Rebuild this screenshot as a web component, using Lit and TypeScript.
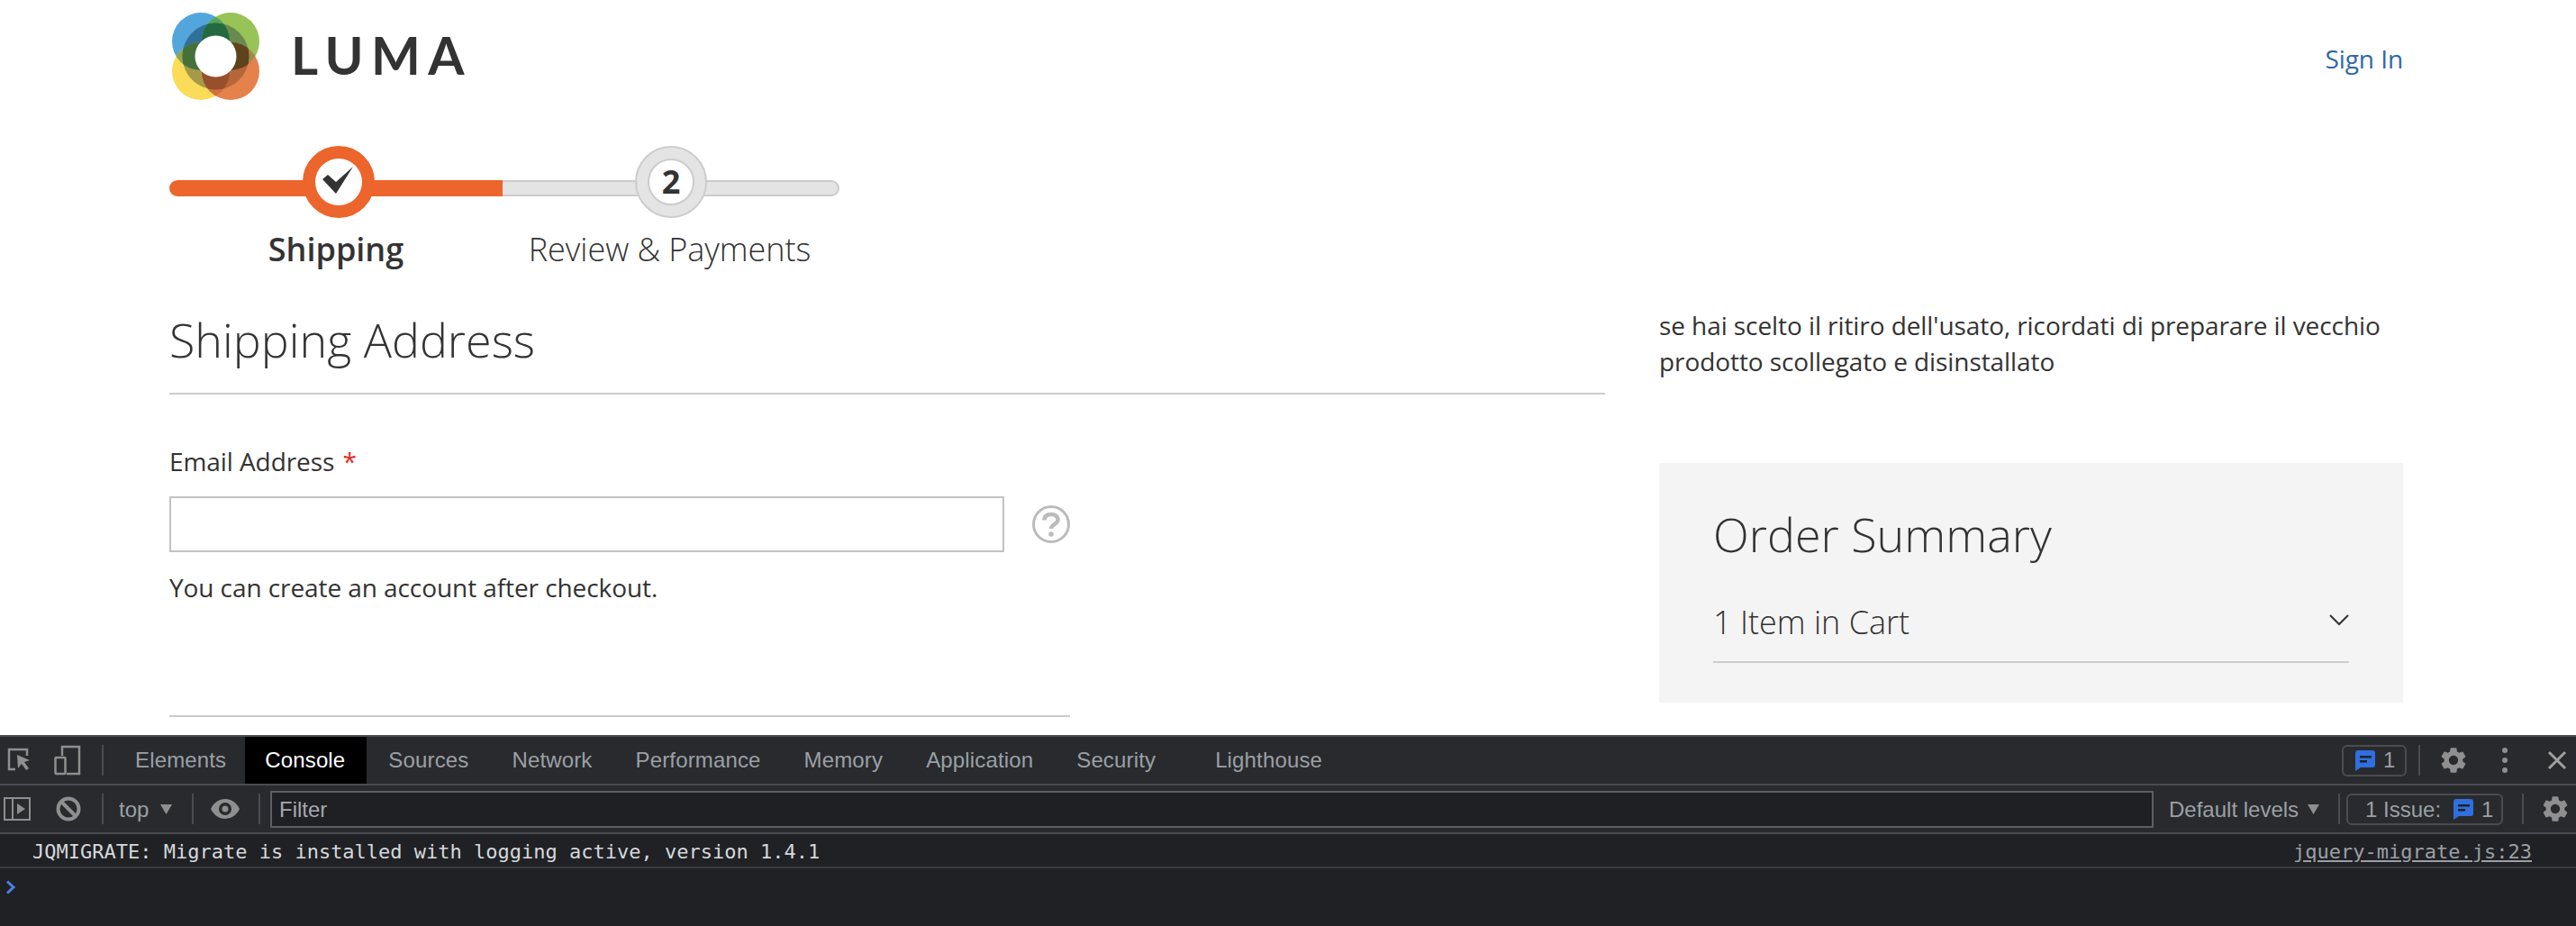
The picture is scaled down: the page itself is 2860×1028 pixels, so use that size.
import { LitElement, html, css, svg } from "lit";
import { customElement } from "lit/decorators.js";

const gearPath =
  "M19.14 12.94c.04-.3.06-.61.06-.94 0-.32-.02-.64-.07-.94l2.03-1.58a.49.49 0 0 0 .12-.61l-1.92-3.32a.488.488 0 0 0-.59-.22l-2.39.96c-.5-.38-1.03-.7-1.62-.94l-.36-2.54a.484.484 0 0 0-.48-.41h-3.84c-.24 0-.43.17-.47.41l-.36 2.54c-.59.24-1.13.57-1.62.94l-2.39-.96c-.22-.08-.47 0-.59.22L2.74 8.87c-.12.21-.08.47.12.61l2.03 1.58c-.05.3-.09.63-.09.94s.02.64.07.94l-2.03 1.58a.49.49 0 0 0-.12.61l1.92 3.32c.12.22.37.29.59.22l2.39-.96c.5.38 1.03.7 1.62.94l.36 2.54c.05.24.24.41.48.41h3.84c.24 0 .44-.17.47-.41l.36-2.54c.59-.24 1.13-.56 1.62-.94l2.39.96c.22.08.47 0 .59-.22l1.92-3.32c.12-.22.07-.47-.12-.61l-2.01-1.58zM12 15.6c-1.98 0-3.6-1.62-3.6-3.6s1.62-3.6 3.6-3.6 3.6 1.62 3.6 3.6-1.62 3.6-3.6 3.6z";

const gear = html`<svg class="gear" viewBox="2.4 2.2 19.2 19.6"><path fill="#8f8f8f" fill-rule="evenodd" d=${gearPath}></path></svg>`;

const msg = html`<svg class="msg" viewBox="0 0 22 23">
  <path fill="#2f6fde" d="M3 0h16a3 3 0 0 1 3 3v13a3 3 0 0 1-3 3H6l-6 4V3a3 3 0 0 1 3-3z"></path>
  <path fill="#202124" d="M5 6h13v2.400H5zM5 11h8v2.400H5z"></path>
</svg>`;

const logo = svg`
  <defs>
    <clipPath id="cb"><circle cx="33" cy="32" r="32"></circle></clipPath>
    <clipPath id="cg"><circle cx="66" cy="32" r="32"></circle></clipPath>
    <clipPath id="cy"><circle cx="33" cy="65" r="32"></circle></clipPath>
    <clipPath id="co"><circle cx="66" cy="65" r="32"></circle></clipPath>
    <clipPath id="cr"><circle cx="49.5" cy="48.5" r="37"></circle></clipPath>
  </defs>
  <circle cx="33" cy="32" r="32" fill="#52a6dc"></circle>
  <circle cx="66" cy="32" r="32" fill="#98c356"></circle>
  <circle cx="33" cy="65" r="32" fill="#fbdc58"></circle>
  <circle cx="66" cy="65" r="32" fill="#e5814a"></circle>
  <g clip-path="url(#cb)"><circle cx="66" cy="32" r="32" fill="#52a458"></circle></g>
  <g clip-path="url(#cg)"><circle cx="66" cy="65" r="32" fill="#a08a4c"></circle></g>
  <g clip-path="url(#co)"><circle cx="33" cy="65" r="32" fill="#cc7240"></circle></g>
  <g clip-path="url(#cy)"><circle cx="33" cy="32" r="32" fill="#8fa552"></circle></g>
  <g clip-path="url(#cr)">
    <circle cx="33" cy="32" r="32" fill="#2f7199"></circle>
    <circle cx="66" cy="32" r="32" fill="#698a4f"></circle>
    <circle cx="33" cy="65" r="32" fill="#a69a48"></circle>
    <circle cx="66" cy="65" r="32" fill="#b6673a"></circle>
    <g clip-path="url(#cb)"><circle cx="66" cy="32" r="32" fill="#236b3f"></circle></g>
    <g clip-path="url(#cg)"><circle cx="66" cy="65" r="32" fill="#5e441c"></circle></g>
    <g clip-path="url(#co)"><circle cx="33" cy="65" r="32" fill="#984f2b"></circle></g>
    <g clip-path="url(#cy)"><circle cx="33" cy="32" r="32" fill="#46703a"></circle></g>
  </g>
  <circle cx="49.5" cy="48.5" r="23" fill="#fff"></circle>
`;

@customElement("app-root")
export class AppRoot extends LitElement {
  static styles = css`
    :host { display: flex; flex-direction: column; width: 2860px; height: 1028px; overflow: hidden; font-family: "Open Sans", sans-serif; color: #333; background: #fff; }
    * { box-sizing: border-box; }

    .page { height: 816px; flex: none; padding: 0 192px 0 188px; overflow: hidden; }
    .header { display: flex; justify-content: space-between; height: 162px; }
    .brand { display: flex; gap: 35px; padding: 14px 0 0 2px; }
    .brand svg { width: 98px; height: 97px; flex: none; }
    .word { font-family: Lato, sans-serif; font-weight: 700; font-size: 58px; line-height: 64px; letter-spacing: 8.5px; color: #333; margin-top: 15px; }
    .signin { color: #2e67a8; font-size: 28px; line-height: 38px; margin-top: 46px; letter-spacing: -0.08px; }

    .steps { display: flex; width: 744px; height: 179px; flex: none; }
    .step { position: relative; width: 374px; display: flex; flex-direction: column; align-items: center; }
    .step.done { width: 370px; }
    .track { position: absolute; left: 0; right: 0; top: 38px; height: 18px; background: #e4e4e4; border-top: 2px solid #ccc; border-bottom: 2px solid #ccc; }
    .step:last-child .track { border-right: 2px solid #ccc; border-radius: 0 9px 9px 0; }
    .step.done .track { background: #ec652c; border: 0; border-radius: 9px 0 0 9px; }
    .dot { position: relative; flex: none; width: 80px; height: 80px; border-radius: 50%; display: flex; align-items: center; justify-content: center; background: #e4e4e4; border: 2px solid #ccc; }
    .dot span { width: 52px; height: 52px; border-radius: 50%; background: #fff; border: 2px solid #ccc; display: flex; align-items: center; justify-content: center; font-weight: 700; font-size: 36px; line-height: 1; color: #333; }
    .done .dot { background: #ec652c; border-color: #ec652c; margin-left: 6px; }
    .done .dot span { border: 0; }
    .done .dot svg { width: 34px; height: 30px; display: block; margin: 0 2px 4px 0; }
    .label { position: relative; margin-top: 11px; font-size: 36px; line-height: 48px; font-weight: 300; color: #333; }
    .done .label { font-weight: 600; }
    .step:last-child .label { margin-left: -3px; letter-spacing: -0.05px; }

    .cols { display: flex; justify-content: space-between; }
    .left { width: 1594px; }
    .right { width: 826px; }
    h2 { margin: 0; font-weight: 300; font-size: 52px; line-height: 72px; color: #333; }
    .hd { border-bottom: 2px solid #ccc; height: 97px; }

    .flabel { font-size: 28px; line-height: 40px; margin-top: 54px; letter-spacing: -0.08px; }
    .flabel i { color: #e02b27; font-style: normal; margin-left: 2px; }
    .field { display: flex; align-items: center; gap: 31px; margin-top: 19px; }
    .input { width: 927px; height: 62px; border: 2px solid #c2c2c2; background: #fff; }
    .help { width: 42px; height: 42px; }
    .note { font-size: 28px; line-height: 40px; margin-top: 19px; letter-spacing: -0.08px; }
    .fieldrule { width: 1000px; height: 2px; background: #ccc; margin-top: 122px; }

    .promo { font-size: 28px; line-height: 40px; margin: 0; width: 826px; color: #333; letter-spacing: -0.08px; }
    .summary { margin-top: 93px; background: #f4f4f4; height: 266px; padding: 43px 60px 0; }
    .cart { display: flex; justify-content: space-between; align-items: flex-start; height: 107px; border-bottom: 2px solid #ccc; font-size: 36px; font-weight: 300; padding-top: 37px; }
    .cart svg { width: 22px; height: 13px; margin-top: 16px; }

    .dt { flex: 1; display: flex; flex-direction: column; background: #202124; font-family: "Liberation Sans", sans-serif; font-size: 24px; color: #9aa0a6; border-top: 2px solid #494c50; }
    .tabs { height: 54px; display: flex; align-items: stretch; background: #292a2d; border-bottom: 2px solid #494c50; flex: none; }
    .row { display: flex; align-items: center; }
    .tools-l { width: 113px; gap: 26px; padding-left: 8px; }
    .sep { width: 2px; height: 34px; background: #494c50; flex: none; }
    .tabs .sep { align-self: center; }
    .tab { display: flex; align-items: center; padding: 0 24px; letter-spacing: 0.15px; }
    .tab.first { margin-left: 11px; padding-right: 21px; }
    .tab.on { background: #000; color: #fff; padding-left: 22px; }
    .tab.light { margin-left: 18px; }
    .spacer { flex: 1; }
    .pill { display: flex; align-items: center; height: 35px; border: 2px solid #4a4c50; border-radius: 6px; color: #9aa0a6; flex: none; }
    .pill.top { width: 72px; padding-left: 13px; gap: 9px; margin-right: 13px; }
    .pill.issue { width: 174px; padding-left: 19px; margin: 0 21px 0 7px; }
    .issue-text { margin-right: 14px; white-space: nowrap; }
    .issue-num { margin-left: 9px; }
    .msg { width: 22px; height: 23px; display: block; flex: none; }
    .gear { width: 28px; height: 28px; display: block; flex: none; }
    .gear-top { margin-left: 23px; }
    .gear-bar { margin: 0 9px 0 21px; }
    .dots { display: flex; flex-direction: column; gap: 5px; margin: 0 44px 0 40px; }
    .dots b { width: 6px; height: 6px; border-radius: 50%; background: #8f8f8f; }
    .x { width: 22px; height: 22px; display: block; margin-right: 10px; }

    .bar { height: 54px; display: flex; align-items: center; background: #292a2d; border-bottom: 2px solid #494c50; flex: none; }
    .bar-l { width: 113px; gap: 28px; padding-left: 4px; }
    .ctx { gap: 13px; padding: 0 21px 0 17px; width: 98px; }
    .ctx span { padding-top: 2px; }
    .eye { padding: 0 21px 0 19px; }
    .filter { flex: 1; height: 41px; margin: 0 17px 0 11px; border: 2px solid #5c5f63; background: #1f2023; display: flex; align-items: center; padding: 2px 0 0 8px; color: #a5a9ae; }
    .levels { display: flex; align-items: center; gap: 10px; width: 188px; white-space: nowrap; flex: none; }
    .levels span, .issue-text, .issue-num { padding-top: 1px; }
    .tri { width: 13px; height: 11px; display: block; }
    .logrow { height: 38px; display: flex; justify-content: space-between; align-items: center; border-bottom: 2px solid #3a3b3e; padding: 2px 49px 0 36px; font-family: "DejaVu Sans Mono", monospace; font-size: 22px; color: #d5d8dc; flex: none; }
    .src { color: #9aa0a6; text-decoration: underline; }
    .prompt { padding: 13px 0 0 6px; }
    .prompt svg { width: 12px; height: 16px; display: block; }
  `;

  render() {
    return html`
      <div class="page">
        <div class="header">
          <div class="brand">
            <svg viewBox="0 0 98 97">${logo}</svg>
            <div class="word">LUMA</div>
          </div>
          <div class="signin">Sign In</div>
        </div>
        <div class="steps">
          <div class="step done">
            <div class="track"></div>
            <div class="dot"><span><svg viewBox="0 0 34 30"><path fill="#333" d="M0 14l6-5 9 8L34 0 15 30z"></path></svg></span></div>
            <div class="label">Shipping</div>
          </div>
          <div class="step">
            <div class="track"></div>
            <div class="dot"><span>2</span></div>
            <div class="label">Review &amp; Payments</div>
          </div>
        </div>
        <div class="cols">
          <div class="left">
            <div class="hd"><h2>Shipping Address</h2></div>
            <div class="flabel">Email Address<i> *</i></div>
            <div class="field">
              <div class="input"></div>
              <svg class="help" viewBox="0 0 42 42">
                <circle cx="21" cy="21" r="19.5" fill="none" stroke="#bbb" stroke-width="3"></circle>
                <path fill="none" stroke="#bbb" stroke-width="4.5" d="M13.5 16.5c0-4.500 3.200-6.500 7.500-6.500s7.500 2.200 7.500 6c0 5-7.500 5-7.500 10"></path>
                <circle cx="21" cy="32" r="2.800" fill="#bbb"></circle>
              </svg>
            </div>
            <div class="note">You can create an account after checkout.</div>
            <div class="fieldrule"></div>
          </div>
          <div class="right">
            <p class="promo">se hai scelto il ritiro dell'usato, ricordati di preparare il vecchio prodotto scollegato e disinstallato</p>
            <div class="summary">
              <h2>Order Summary</h2>
              <div class="cart">
                <span>1 Item in Cart</span>
                <svg viewBox="0 0 22 13"><path fill="none" stroke="#333" stroke-width="2" d="M1 1l10 10L21 1"></path></svg>
              </div>
            </div>
          </div>
        </div>
      </div>

      <div class="dt">
        <div class="tabs">
          <div class="row tools-l">
            <svg width="26" height="28" viewBox="0 0 26 28" fill="none" stroke="#8f8f8f" stroke-width="2.500">
              <path d="M9 24H2V2h20v7"></path>
              <path fill="#8f8f8f" stroke="none" d="M11 8l14 6-6 2 5 7-3 2-5-7-4 5z"></path>
            </svg>
            <svg width="30" height="34" viewBox="0 0 30 34" fill="none" stroke="#8f8f8f" stroke-width="2.500">
              <path d="M9 12V2h19v30H14"></path>
              <rect x="1.500" y="14" width="11" height="18" rx="1"></rect>
            </svg>
          </div>
          <div class="sep"></div>
          <div class="tab first">Elements</div>
          <div class="tab on">Console</div>
          <div class="tab">Sources</div>
          <div class="tab">Network</div>
          <div class="tab">Performance</div>
          <div class="tab">Memory</div>
          <div class="tab">Application</div>
          <div class="tab">Security</div>
          <div class="tab light">Lighthouse</div>
          <div class="spacer"></div>
          <div class="row">
            <div class="pill top">${msg}<span>1</span></div>
            <div class="sep"></div>
            <div class="row gear-top">${gear}</div>
            <div class="dots"><b></b><b></b><b></b></div>
            <svg class="x" viewBox="0 0 22 22"><path fill="none" stroke="#a0a0a0" stroke-width="3" d="M2 2l18 18M20 2L2 20"></path></svg>
          </div>
        </div>
        <div class="bar">
          <div class="row bar-l">
            <svg width="30" height="26" viewBox="0 0 30 26" fill="none" stroke="#8f8f8f" stroke-width="2">
              <rect x="1" y="1" width="28" height="24"></rect><path d="M10 1v24"></path>
              <path fill="#8f8f8f" stroke="none" d="M15 7l9 6-9 6z"></path>
            </svg>
            <svg width="28" height="28" viewBox="0 0 28 28" fill="none" stroke="#8f8f8f" stroke-width="4">
              <circle cx="14" cy="14" r="11.500"></circle><path d="M6 6l16 16"></path>
            </svg>
          </div>
          <div class="sep"></div>
          <div class="row ctx">
            <span>top</span>
            <svg class="tri" viewBox="0 0 13 11"><path fill="#8f8f8f" d="M0 0h13L6.500 11z"></path></svg>
          </div>
          <div class="sep"></div>
          <div class="row eye">
            <svg width="32" height="22" viewBox="0 0 32 22"><path fill="#8f8f8f" fill-rule="evenodd" d="M16 0c7 0 13 4.500 16 11-3 6.500-9 11-16 11S3 17.500 0 11C3 4.500 9 0 16 0zm0 4a7 7 0 1 0 0 14 7 7 0 0 0 0-14zm0 3.500a3.500 3.500 0 1 1 0 7 3.500 3.500 0 0 1 0-7z"></path></svg>
          </div>
          <div class="sep"></div>
          <div class="filter">Filter</div>
          <div class="levels"><span>Default levels</span><svg class="tri" viewBox="0 0 13 11"><path fill="#8f8f8f" d="M0 0h13L6.500 11z"></path></svg></div>
          <div class="sep"></div>
          <div class="pill issue">
            <span class="issue-text">1 Issue:</span>${msg}<span class="issue-num">1</span>
          </div>
          <div class="sep"></div>
          <div class="row gear-bar">${gear}</div>
        </div>
        <div class="logrow">
          <span>JQMIGRATE: Migrate is installed with logging active, version 1.4.1</span>
          <span class="src">jquery-migrate.js:23</span>
        </div>
        <div class="prompt">
          <svg viewBox="0 0 12 16"><path fill="none" stroke="#4a80e8" stroke-width="3" d="M2 1.500L9 8l-7 6.500"></path></svg>
        </div>
      </div>
    `;
  }
}
